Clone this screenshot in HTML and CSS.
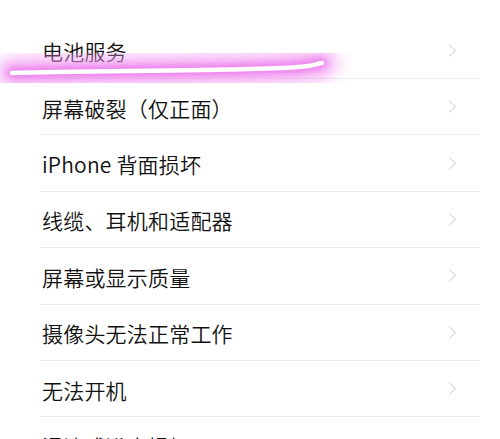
FILE: index.html
```html
<!DOCTYPE html>
<html lang="zh-CN">
<head>
<meta charset="utf-8">
<link rel="stylesheet" href="styles.css">
</head>
<body>
<div class="page">
  <ul class="list">
    <li class="row"><span class="label">电池服务</span><span class="chev"></span></li>
    <li class="row"><span class="label">屏幕破裂（仅正面）</span><span class="chev"></span></li>
    <li class="row"><span class="label">iPhone 背面损坏</span><span class="chev"></span></li>
    <li class="row"><span class="label">线缆、耳机和适配器</span><span class="chev"></span></li>
    <li class="row"><span class="label">屏幕或显示质量</span><span class="chev"></span></li>
    <li class="row"><span class="label">摄像头无法正常工作</span><span class="chev"></span></li>
    <li class="row"><span class="label">无法开机</span><span class="chev"></span></li>
    <li class="row"><span class="label">浸液或进水损坏</span><span class="chev"></span></li>
  </ul>
  <svg class="mark" width="380" height="80" viewBox="0 0 380 80" aria-hidden="true">
    <defs>
      <filter id="glow" x="-20%" y="-100%" width="140%" height="300%">
        <feGaussianBlur stdDeviation="8"/>
      </filter>
      <filter id="mid" x="-20%" y="-100%" width="140%" height="300%">
        <feGaussianBlur stdDeviation="3.5"/>
      </filter>
      <filter id="soft" x="-5%" y="-100%" width="110%" height="300%">
        <feGaussianBlur stdDeviation="0.7"/>
      </filter>
    </defs>
    <path d="M12 43 C 80 41, 180 41, 250 39 S 310 35, 322 33" fill="none" stroke="#f296f2" stroke-width="30" stroke-linecap="round" filter="url(#glow)" opacity="0.75"/>
    <path d="M12 43 C 80 41, 180 41, 250 39 S 310 35, 322 33" fill="none" stroke="#ea6eea" stroke-width="10" stroke-linecap="round" filter="url(#mid)" opacity="0.8"/>
    <path d="M12 43 C 80 41, 180 41, 250 39 S 310 35, 322 33" fill="none" stroke="#ffffff" stroke-width="4.5" stroke-linecap="round" filter="url(#soft)"/>
  </svg>
</div>
</body>
</html>
```

FILE: styles.css
```css
html, body {
  margin: 0;
  padding: 0;
  background: #ffffff;
}
.page {
  position: relative;
  width: 500px;
  height: 439px;
  overflow: hidden;
  font-family: "Noto Sans CJK SC", "Noto Sans", sans-serif;
}
.list {
  list-style: none;
  margin: 0;
  padding: 22.6px 20px 0 40px;
}
.row {
  display: flex;
  align-items: center;
  justify-content: space-between;
  height: 55.4px;
  border-bottom: 1px solid #ececec;
  padding-left: 2px;
}
.label {
  font-size: 21px;
  font-weight: 350;
  color: #111111;
  letter-spacing: 0.2px;
  margin-top: 2px;
}
.chev {
  width: 8px;
  height: 8px;
  border-top: 1.5px solid #d2d2d6;
  border-right: 1.5px solid #d2d2d6;
  transform: rotate(45deg);
  margin-right: 26px;
}
.mark {
  position: absolute;
  left: 0;
  top: 20px;
  margin-top: 10px;
}
```
